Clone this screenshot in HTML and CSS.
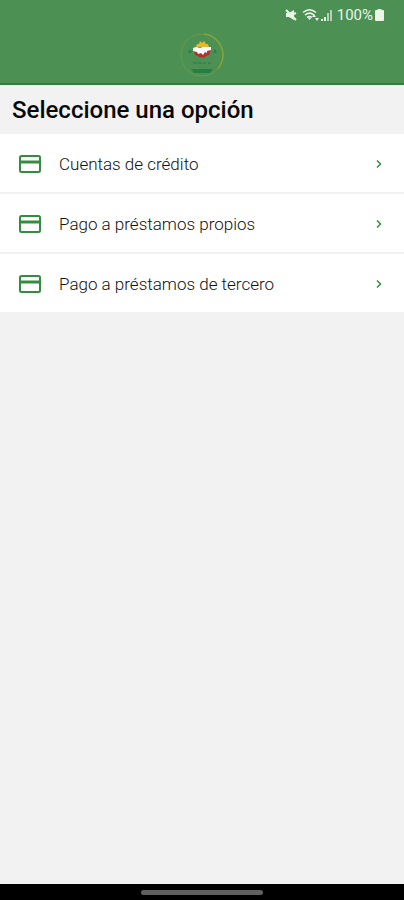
FILE: index.html
```html
<!DOCTYPE html>
<html lang="es">
<head>
<meta charset="utf-8">
<meta name="viewport" content="width=device-width, initial-scale=1">
<title>Seleccione una opción</title>
<link rel="stylesheet" href="styles.css">
</head>
<body>
<header class="app-bar">
  <div class="status">
    <svg class="mute" viewBox="0 0 12 12" aria-hidden="true"><path d="M1 4h3l5-3v10L4 8H1z"/><path class="slash" d="M1 1l10 10M9 5l2-1"/></svg>
    <svg class="wifi" viewBox="0 0 18 14" aria-hidden="true"><path d="M1 4.500Q7.500-1 14 4.500M3 7Q7.500 3.200 12 7M5 9.300Q7.500 7.500 10 9.300"/><path class="solid" d="M5.500 9.500h4l-2 2.500zM10 9l2-3 2 3zM13 10h4l-2 3z"/></svg>
    <svg class="signal" viewBox="0 0 12 12" aria-hidden="true"><path d="M0 10h2v2H0zM3 8h2v4H3z"/><path class="dim" d="M6 4h2v8H6zM9 1h2v11H9z"/></svg>
    <span class="percent">100%</span>
    <svg class="battery" viewBox="0 0 9 12" aria-hidden="true"><path d="M2.500 0h4v1H8q1 0 1 1v9q0 1-1 1H1q-1 0-1-1V2q0-1 1-1h1.500z"/></svg>
  </div>
  <svg class="logo" viewBox="0 0 44 44" aria-hidden="true">
    <circle cx="22" cy="22" r="21" fill="none" stroke="#6b9a4b"/>
    <path d="M24 1.100A21 21 0 0 1 38 35.500" fill="none" stroke="#8ba43a" stroke-width="1.500"/>
    <path d="M8 20l2-4 2 4zM33 20l2-4 2 4z" fill="#26804a"/>
    <path d="M16 14l1-3 2 0 1-3 2 2 2-2 2 3 2 0 1 3z" fill="#e4b92d"/>
    <path d="M14 17h17l-2 5-3 1-2 2-2-1-2 1-2-2-3-1z" fill="#b72e2c"/>
    <path d="M13 15l3-1 4 1 3-1h8v3l-4 1v2l-2-1-2 3-2-2-3 1-1-2-4-1z" fill="#fff"/>
    <path d="M13 30h4M18 30h4M23 30h3M28 30h3" stroke="#368555" stroke-width="2"/>
    <path d="M11 36h22l-3 4H14z" fill="#277e42"/>
  </svg>
</header>
<main>
  <h1>Seleccione una opción</h1>
  <nav class="options" aria-label="Opciones">
    <a href="#credito"><svg class="card" viewBox="0 0 22 18" aria-hidden="true"><rect x="1" y="1" width="20" height="16" rx="1.500"/><path d="M1 7h20"/></svg><span>Cuentas de crédito</span><svg class="chevron" viewBox="0 0 6 8" aria-hidden="true"><path d="M1 .5L4.500 4 1 7.500"/></svg></a>
    <a href="#propios"><svg class="card" viewBox="0 0 22 18" aria-hidden="true"><rect x="1" y="1" width="20" height="16" rx="1.500"/><path d="M1 7h20"/></svg><span>Pago a préstamos propios</span><svg class="chevron" viewBox="0 0 6 8" aria-hidden="true"><path d="M1 .5L4.500 4 1 7.500"/></svg></a>
    <a href="#tercero"><svg class="card" viewBox="0 0 22 18" aria-hidden="true"><rect x="1" y="1" width="20" height="16" rx="1.500"/><path d="M1 7h20"/></svg><span>Pago a préstamos de tercero</span><svg class="chevron" viewBox="0 0 6 8" aria-hidden="true"><path d="M1 .5L4.500 4 1 7.500"/></svg></a>
  </nav>
</main>
<footer class="system-bar"><div class="handle"></div></footer>
</body>
</html>
```
FILE: styles.css
```css
* { box-sizing: border-box; }
body {
  margin: 0;
  min-height: 100vh;
  display: flex;
  flex-direction: column;
  background: #f2f2f2;
  color: #080808;
  font-family: Roboto, "Liberation Sans", sans-serif;
}
svg { display: block; flex: none; }
.app-bar {
  background: #4c9053;
  border-bottom: 2px solid #32803e;
  padding-bottom: 6px;
}
.status {
  display: flex;
  align-items: center;
  justify-content: flex-end;
  height: 30px;
  padding-right: 20px;
  color: #eaf4e9;
  fill: #eaf4e9;
}
.mute { width: 12px; height: 12px; margin-right: 5px; }
.slash { stroke: #eaf4e9; stroke-width: 2; }
.wifi { width: 18px; height: 14px; margin-right: 1px; }
.wifi path { fill: none; stroke: #eaf4e9; stroke-width: 1.5; }
.wifi .solid { fill: #eaf4e9; stroke: none; }
.signal { width: 12px; height: 12px; margin-right: 4px; }
.dim { opacity: .65; }
.percent { font-size: 15px; line-height: 20px; margin-right: 2px; }
.battery { width: 9px; height: 12px; }
.logo { width: 44px; height: 44px; margin: 3px auto 0; }
main { flex: 1; }
h1 {
  margin: 0;
  padding: 11px 12px 10px;
  font-size: 24px;
  line-height: 28px;
  font-weight: 500;
}
.options { display: flex; flex-direction: column; gap: 2px; }
.options a {
  display: flex;
  align-items: center;
  height: 58px;
  padding: 2px 22px 0 19px;
  background: #fff;
  color: #111;
  font-size: 17px;
  line-height: 24px;
  font-weight: 300;
  text-decoration: none;
}
.options span { flex: 1; margin-left: 18px; }
.card { width: 22px; height: 18px; fill: none; stroke: #348c40; stroke-width: 2; }
.card path { stroke-width: 3; }
.chevron { width: 6px; height: 8px; fill: none; stroke: #348c40; stroke-width: 1.5; }
.system-bar {
  display: flex;
  align-items: center;
  justify-content: center;
  height: 16px;
  background: #000;
}
.handle { width: 30%; height: 5px; border-radius: 3px; background: #606060; }
```
